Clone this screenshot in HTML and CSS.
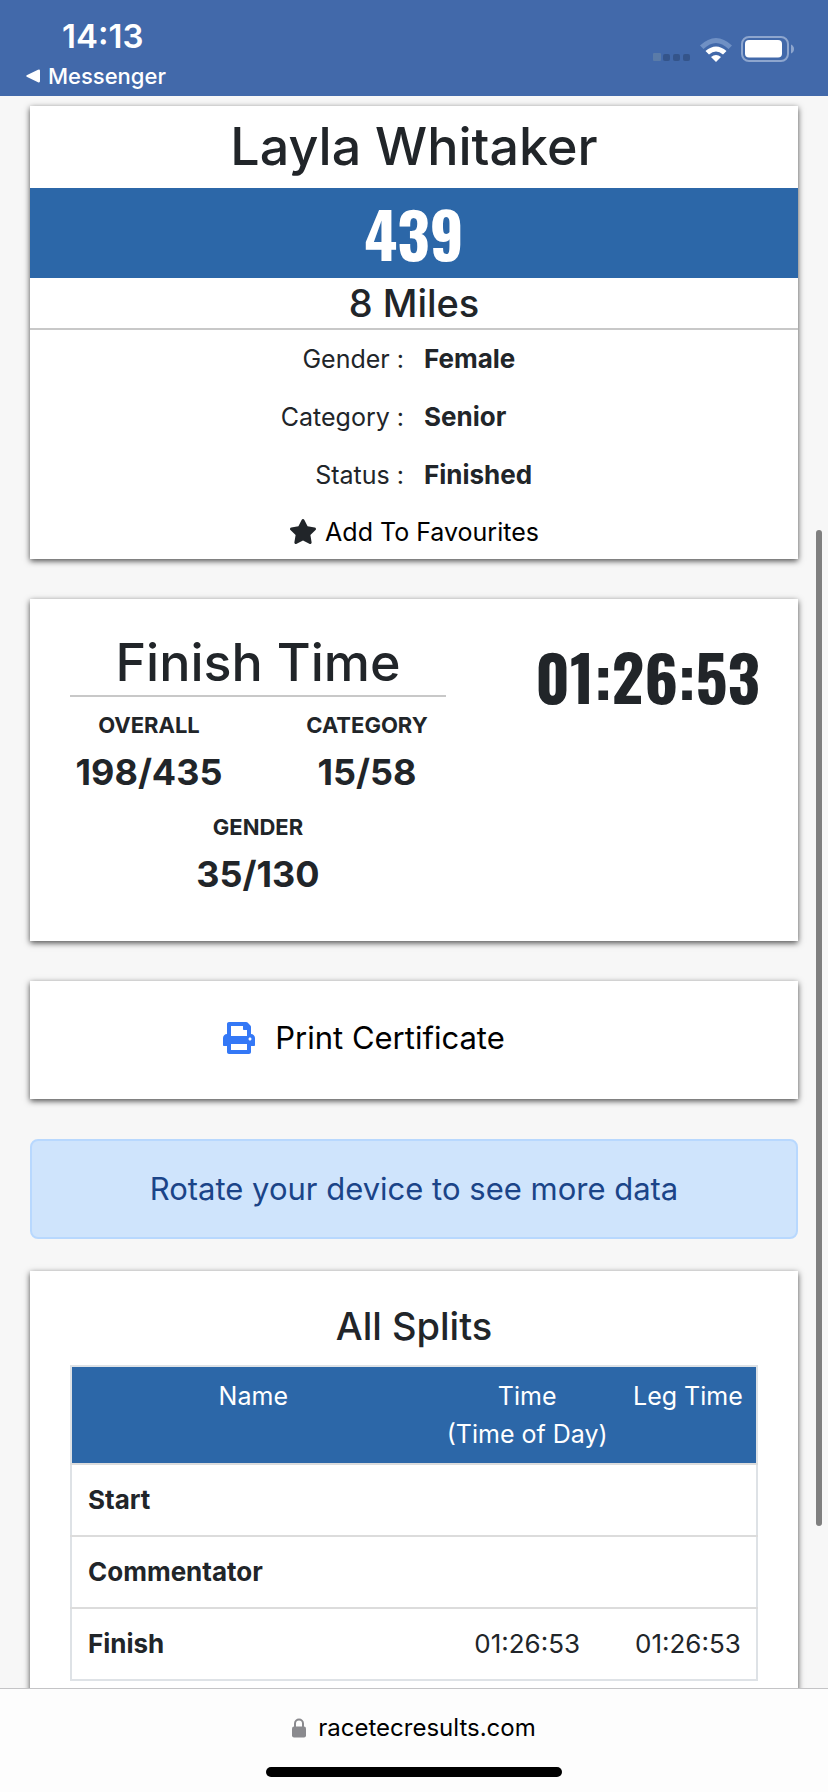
FILE: index.html
```
<!DOCTYPE html>
<html lang="en">
<head>
    <meta charset="UTF-8">
    <meta name="viewport" content="width=device-width, initial-scale=1.0">
    <title>Race Results</title>
    <link rel="stylesheet" href="styles.css">
</head>
<body>

    <header class="status-bar">
        <div class="status-left">
            <span class="clock">14:13</span>
            <a class="back-link" href="#">
                <svg class="back-arrow" viewBox="0 0 14 14"><path d="M1.2 6 12 .8Q14 0 14 2v10q0 2-2 1.200L1.200 8Q-.8 7 1.200 6z" fill="#fff"/></svg>
                Messenger
            </a>
        </div>
        <div class="status-icons">
            <svg width="38" height="10" viewBox="0 0 38 10">
                <rect x="0" y="1" width="8" height="8" rx="1" fill="#5a7ba8"/>
                <rect x="10" y="2" width="7" height="7" rx="2" fill="#34548a"/>
                <rect x="20" y="2" width="7" height="7" rx="2" fill="#34548a"/>
                <rect x="30" y="2" width="7" height="7" rx="2" fill="#34548a"/>
            </svg>
            <svg width="32" height="24" viewBox="0 0 32 24">
                <path d="M0 7.500Q16-7.500 32 7.500L28.500 11Q16-1 3.500 11z" fill="#6f90c4"/>
                <path d="M5.500 13Q16 4 26.500 13L23 16.500Q16 10.500 9 16.500z" fill="#fff"/>
                <path d="M11 19Q16 15 21 19L16 24z" fill="#fff"/>
            </svg>
            <svg width="53" height="26" viewBox="0 0 53 26">
                <rect x="1" y="1" width="46" height="24" rx="7" fill="none" stroke="#8ea6ce" stroke-width="2"/>
                <rect x="4" y="4" width="37" height="17.500" rx="4" fill="#fff"/>
                <path d="M50 8.500q3 1.500 3 4.500t-3 4.500z" fill="#8ea6ce"/>
            </svg>
        </div>
    </header>

    <main class="content">
        <section class="card runner">
            <h1 class="title">Layla Whitaker</h1>
            <div class="bib">439</div>
            <h2 class="subtitle race">8 Miles</h2>
            <dl class="details">
                <dt>Gender :</dt>
                <dd>Female</dd>
                <dt>Category :</dt>
                <dd>Senior</dd>
                <dt>Status :</dt>
                <dd>Finished</dd>
            </dl>
            <button class="favourite" type="button">
                <svg width="28" height="27" viewBox="0 0 576 512"><path fill="#212529" d="M259.300 17.800L194 150.200 47.900 171.500c-26.200 3.800-36.700 36.100-17.700 54.600l105.700 103-25 145.500c-4.500 26.300 23.200 46 46.400 33.700L288 439.600l130.700 68.700c23.200 12.200 50.900-7.400 46.400-33.700l-25-145.500 105.700-103c19-18.500 8.500-50.800-17.700-54.600L382 150.200 316.700 17.800c-11.700-23.600-45.600-23.900-57.400 0z"/></svg>
                Add To Favourites
            </button>
        </section>

        <section class="card finish">
            <div class="placings">
                <h1 class="title">Finish Time</h1>
                <div class="place">
                    <h3>OVERALL</h3>
                    <p>198/435</p>
                </div>
                <div class="place">
                    <h3>CATEGORY</h3>
                    <p>15/58</p>
                </div>
                <div class="place place-wide">
                    <h3>GENDER</h3>
                    <p>35/130</p>
                </div>
            </div>
            <div class="finish-time">01:26:53</div>
        </section>

        <section class="card certificate">
            <a class="print-link" href="#">
                <svg width="32" height="32" viewBox="0 0 512 512"><path fill="#3478f6" d="M448 192V77.250c0-8.490-3.370-16.620-9.370-22.630L393.370 9.370c-6-6-14.140-9.370-22.630-9.370H96C78.330 0 64 14.330 64 32v160c-35.350 0-64 28.650-64 64v112c0 8.840 7.160 16 16 16h48v96c0 17.670 14.330 32 32 32h320c17.670 0 32-14.330 32-32v-96h48c8.840 0 16-7.160 16-16V256c0-35.350-28.650-64-64-64zm-64 256H128v-96h256v96zm0-224H128V64h192v48c0 8.840 7.160 16 16 16h48v96zm48 72c-13.250 0-24-10.750-24-24 0-13.260 10.750-24 24-24s24 10.740 24 24c0 13.250-10.750 24-24 24z"/></svg>
                Print Certificate
            </a>
        </section>

        <div class="alert">Rotate your device to see more data</div>

        <section class="card splits">
            <h2 class="subtitle">All Splits</h2>
            <table>
                <thead>
                    <tr>
                        <th class="col-name">Name</th>
                        <th class="col-time">Time<br>(Time of Day)</th>
                        <th class="col-leg">Leg Time</th>
                    </tr>
                </thead>
                <tbody>
                    <tr>
                        <td>Start</td>
                        <td></td>
                        <td></td>
                    </tr>
                    <tr>
                        <td>Commentator</td>
                        <td></td>
                        <td></td>
                    </tr>
                    <tr>
                        <td>Finish</td>
                        <td>01:26:53</td>
                        <td>01:26:53</td>
                    </tr>
                </tbody>
            </table>
        </section>
    </main>

    <div class="scroll-thumb"></div>

    <footer class="browser-bar">
        <div class="address">
            <svg width="14" height="20" viewBox="0 0 14 20">
                <path d="M3 9V5.500a4 4 0 0 1 8 0V9" fill="none" stroke="#8a8a8e" stroke-width="2"/>
                <rect x="0" y="8.500" width="14" height="11" rx="2" fill="#8a8a8e"/>
            </svg>
            racetecresults.com
        </div>
        <div class="home-indicator"></div>
    </footer>

</body>
</html>
```
FILE: styles.css
```
* {
    box-sizing: border-box;
}
body {
    margin: 0;
    height: 100vh;
    display: flex;
    flex-direction: column;
    position: relative;
    overflow: hidden;
    background-color: #f7f7f7;
    color: #212529;
    font-family: Inter, "Liberation Sans", sans-serif;
    font-size: 25px;
    line-height: 38px;
}
h1, h2, h3, p, dl, dd {
    margin: 0;
}
a {
    color: inherit;
    text-decoration: none;
}

/* status bar */
.status-bar {
    flex: none;
    height: 96px;
    padding: 16px 34px 0 26px;
    display: flex;
    justify-content: space-between;
    background-color: #4269aa;
    color: #fff;
}
.status-left {
    display: flex;
    flex-direction: column;
}
.clock {
    padding-left: 36px;
    font-size: 33px;
    font-weight: 600;
    line-height: 40px;
}
.back-link {
    display: flex;
    align-items: center;
    gap: 8px;
    font-size: 22px;
    font-weight: 500;
    line-height: 40px;
}
.back-arrow {
    width: 14px;
    height: 14px;
}
.status-icons {
    display: flex;
    align-items: flex-end;
    gap: 9px;
    height: 46px;
}

/* cards */
.content {
    flex: 1;
    min-height: 0;
    overflow: hidden;
    padding: 10px 30px 0;
}
.card {
    margin-bottom: 40px;
    background-color: #fff;
    box-shadow: 0 2px 6px rgba(0,0,0,0.7);
    text-align: center;
}
.title {
    font-size: 52px;
    font-weight: 500;
    line-height: 64px;
}
.subtitle {
    font-size: 38px;
    font-weight: 500;
    line-height: 50px;
}
.runner .title {
    padding: 9px 0;
}
.bib, .finish-time {
    font-family: Oswald, "Liberation Sans Narrow", "DejaVu Sans Condensed", sans-serif;
    font-size: 63px;
    font-weight: bold;
    line-height: 90px;
}
.bib {
    background-color: #2c67a8;
    color: #fff;
}
.race {
    border-bottom: 2px solid #c8c8c8;
}
.details {
    display: grid;
    grid-template-columns: 374px 1fr;
    column-gap: 20px;
    line-height: 58px;
}
.details dt {
    text-align: right;
}
.details dd {
    font-size: 26px;
    text-align: left;
    font-weight: bold;
}
.favourite {
    display: flex;
    align-items: center;
    justify-content: center;
    gap: 8px;
    width: 100%;
    height: 55px;
    padding: 0;
    border: none;
    background: none;
    color: #000;
    font: inherit;
    cursor: pointer;
}

/* finish time */
.finish {
    display: flex;
    justify-content: space-between;
    padding: 32px 38px;
}
.placings {
    flex: 0 0 378px;
    padding-left: 2px;
    display: grid;
    grid-template-columns: 158px 158px;
    justify-content: space-between;
}
.placings .title {
    grid-column: 1 / 3;
    border-bottom: 2px solid #c8c8c8;
    margin-bottom: 8px;
}
.place {
    height: 102px;
}
.place-wide {
    grid-column: 1 / 3;
}
.place h3 {
    font-size: 22px;
    line-height: 40px;
}
.place p {
    font-size: 36px;
    font-weight: bold;
    line-height: 54px;
}

/* certificate */
.certificate {
    display: flex;
    justify-content: center;
    padding: 38px 100px 42px 0;
}
.print-link {
    display: flex;
    align-items: center;
    gap: 20px;
    color: #000;
    font-size: 31px;
}
.alert {
    margin-bottom: 32px;
    padding: 29px 20px;
    border: 2px solid #b8d8fe;
    border-radius: 8px;
    background-color: #cfe4fc;
    color: #1b4488;
    font-size: 31px;
    text-align: center;
}

/* splits */
.splits {
    padding: 30px 40px 40px;
}
.splits table {
    width: 100%;
    margin-top: 14px;
    border: 2px solid #dee2e6;
    border-collapse: collapse;
    table-layout: fixed;
}
.splits th {
    padding: 10px 0;
    background-color: #2c67a8;
    color: #fff;
    font-weight: normal;
    vertical-align: top;
}
.col-name {
    width: 53%;
}
.col-time {
    width: 27%;
}
.col-leg {
    width: 20%;
}
.splits td {
    height: 72px;
    padding: 0;
    border-top: 2px solid #dcdcdc;
    font-size: 26px;
}
.splits td:first-child {
    padding-left: 16px;
    text-align: left;
    font-weight: bold;
}

.scroll-thumb {
    position: absolute;
    top: 530px;
    right: 6px;
    width: 6px;
    height: 996px;
    border-radius: 3px;
    background-color: #7f7f7f;
}

/* browser bar */
.browser-bar {
    flex: none;
    height: 104px;
    padding-top: 20px;
    border-top: 1px solid #c4c4c6;
    background-color: #fdfdfd;
    color: #000;
}
.address {
    display: flex;
    align-items: center;
    justify-content: center;
    gap: 12px;
    font-size: 24px;
}
.home-indicator {
    width: 296px;
    height: 10px;
    margin: 20px auto 0;
    border-radius: 5px;
    background-color: #000;
}
```
